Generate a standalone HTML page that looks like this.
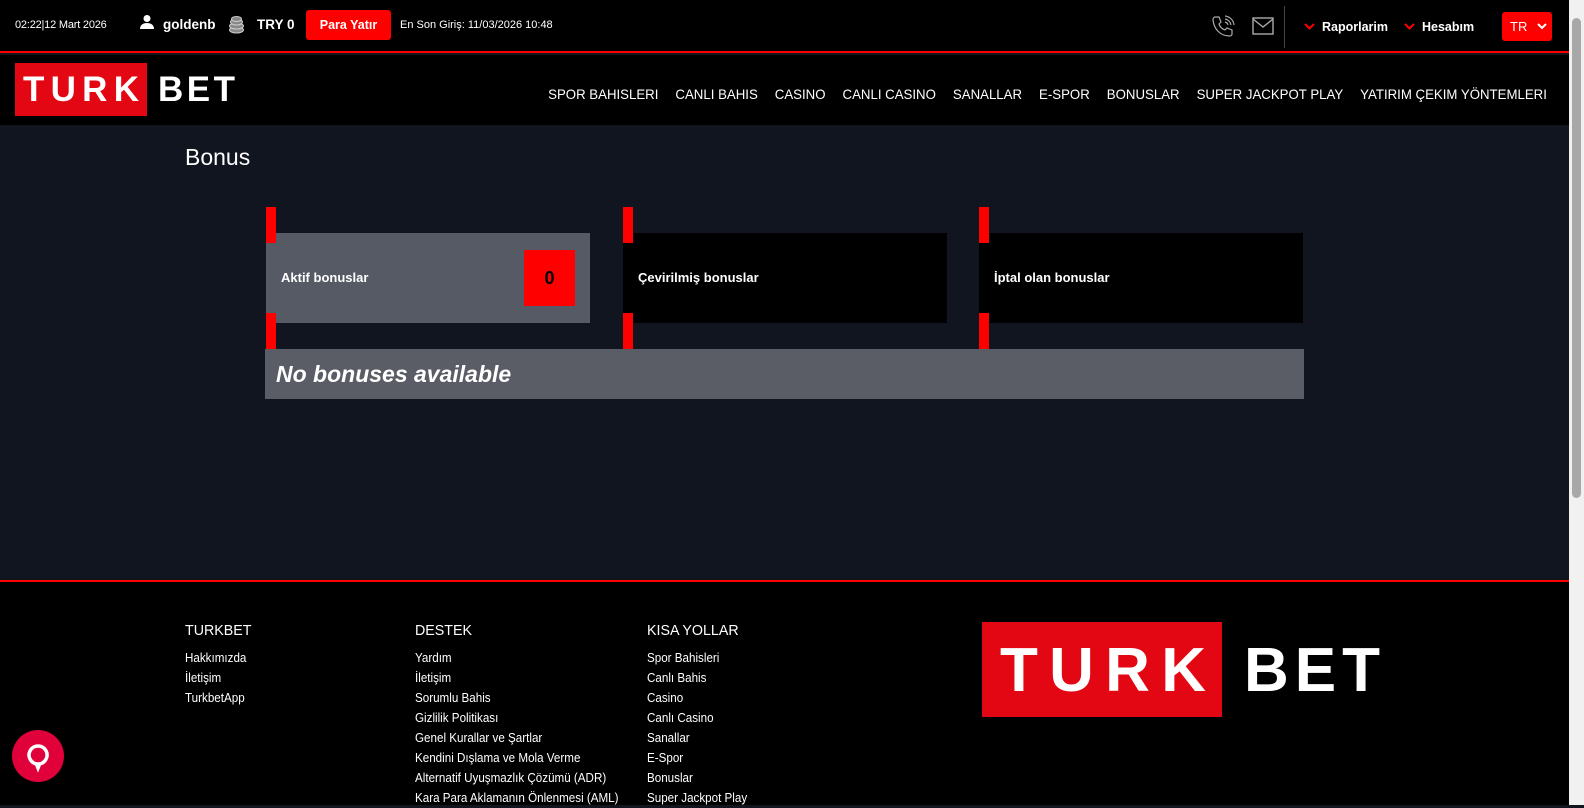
<!DOCTYPE html>
<html><head><meta charset="utf-8">
<style>
*{margin:0;padding:0;box-sizing:border-box}
html,body{width:1584px;height:805px;overflow:hidden;background:#111520;font-family:"Liberation Sans",Arial,sans-serif;color:#fff}
.abs{position:absolute}
#top{position:absolute;left:0;top:0;width:1569px;height:53px;background:#000;border-bottom:2px solid #f00}
#hdr{position:absolute;left:0;top:55px;width:1569px;height:70px;background:#000}
.nav{position:absolute;right:37px;top:86px;display:flex;gap:18px;font-size:14px;transform:scaleX(.945);transform-origin:right center;white-space:nowrap}
#scroll{position:absolute;left:1569px;top:0;width:15px;height:805px;background:#f1f1f1}
#thumb{position:absolute;left:1572px;top:18px;width:9px;height:480px;background:#a8a8a8;border-radius:5px}
.bar{position:absolute;width:10px;background:#f00}
.card{position:absolute;top:233px;height:90px;width:324px;background:#000;font-size:13px;font-weight:bold;padding-left:15px;line-height:90px}
#foot{position:absolute;left:0;top:580px;width:1569px;height:225px;background:#000;border-top:2px solid #f00}
.fc{position:absolute;top:622px}
.fc h4{font-weight:normal;font-size:15px;margin-bottom:9px;transform:scaleX(.95);transform-origin:left}
.fc div{font-size:12.5px;line-height:20px;transform:scaleX(.93);transform-origin:left;white-space:nowrap}
</style></head><body>
<div id="top"></div>
<div class="abs" style="left:15px;top:19px;font-size:11px;letter-spacing:-.2px">02:22|12 Mart 2026</div>
<svg class="abs" style="left:139px;top:14px" width="16" height="16" viewBox="0 0 16 16"><circle cx="8" cy="4.5" r="3.5" fill="#fff"/><path d="M1 15c0-4 3-6 7-6s7 2 7 6z" fill="#fff"/></svg>
<div class="abs" style="left:163px;top:17px;font-size:13.5px;font-weight:bold">goldenb</div>
<svg class="abs" style="left:228px;top:15px" width="17" height="19" viewBox="0 0 17 19"><g fill="#888" stroke="#ccc" stroke-width="1"><ellipse cx="8.5" cy="15" rx="7" ry="3"/><ellipse cx="8.5" cy="11" rx="7" ry="3"/><ellipse cx="8.5" cy="7" rx="6" ry="3"/><ellipse cx="8.5" cy="4" rx="5" ry="2.5"/></g></svg>
<div class="abs" style="left:257px;top:17px;font-size:13.5px;font-weight:bold">TRY 0</div>
<div class="abs" style="left:306px;top:10px;width:85px;height:30px;background:#f00;border-radius:3px;font-size:12.5px;font-weight:bold;text-align:center;line-height:30px">Para Yatır</div>
<div class="abs" style="left:400px;top:19px;font-size:11px">En Son Giriş: 11/03/2026 10:48</div>
<svg class="abs" style="left:1210px;top:14px" width="26" height="26" viewBox="0 0 26 26" fill="none" stroke="#aaa" stroke-width="1.2"><path d="M5 3l4 0 2 5-2 2c1 3 3 5 6 6l2-2 5 2v4c0 1-1 2-2 2C10 22 4 15 3 6c0-2 1-3 2-3z"/><path d="M15 8a4 4 0 0 1 3 3M15 5a7 7 0 0 1 6 6M15 2a10 10 0 0 1 9 9"/></svg>
<svg class="abs" style="left:1252px;top:17px" width="22" height="18" viewBox="0 0 22 18" fill="none" stroke="#aaa" stroke-width="1.4"><rect x="1" y="1" width="20" height="16"/><path d="M1 2l10 8 10-8"/></svg>
<div class="abs" style="left:1284px;top:6px;width:1px;height:42px;background:#444"></div>
<svg class="abs" style="left:1304px;top:23px" width="11" height="7" viewBox="0 0 11 7"><path d="M1 1l4.5 4.5L10 1" stroke="#f00" stroke-width="2" fill="none"/></svg>
<div class="abs" style="left:1322px;top:20px;font-size:12.5px;font-weight:bold">Raporlarim</div>
<svg class="abs" style="left:1404px;top:23px" width="11" height="7" viewBox="0 0 11 7"><path d="M1 1l4.5 4.5L10 1" stroke="#f00" stroke-width="2" fill="none"/></svg>
<div class="abs" style="left:1422px;top:20px;font-size:12.5px;font-weight:bold">Hesabım</div>
<div class="abs" style="left:1502px;top:12px;width:50px;height:29px;background:#f00;border-radius:3px"></div>
<div class="abs" style="left:1510px;top:19px;font-size:13px">TR</div>
<svg class="abs" style="left:1537px;top:23px" width="10" height="7" viewBox="0 0 10 7"><path d="M1 1l4 4 4-4" stroke="#fff" stroke-width="2" fill="none"/></svg>

<div id="hdr"></div>
<svg class="abs" style="left:15px;top:63px" width="222" height="53" viewBox="0 0 222 53">
<rect x="0" y="0" width="132" height="53" fill="#e30613"/>
<text x="8" y="38" font-family="Liberation Sans" font-weight="bold" font-size="35" fill="#fff" textLength="116" lengthAdjust="spacing">TURK</text>
<text x="143" y="38" font-family="Liberation Sans" font-weight="bold" font-size="35" fill="#fff" textLength="77" lengthAdjust="spacing">BET</text>
</svg>
<div class="nav"><span>SPOR BAHISLERI</span><span>CANLI BAHIS</span><span>CASINO</span><span>CANLI CASINO</span><span>SANALLAR</span><span>E-SPOR</span><span>BONUSLAR</span><span>SUPER JACKPOT PLAY</span><span>YATIRIM ÇEKIM YÖNTEMLERI</span></div>

<div class="abs" style="left:185px;top:144px;font-size:23px">Bonus</div>

<div class="card" style="left:266px;background:#555a64">Aktif bonuslar</div>
<div class="abs" style="left:524px;top:250px;width:51px;height:56px;background:#f00;color:#000;font-size:18px;font-weight:bold;text-align:center;line-height:56px">0</div>
<div class="card" style="left:623px">Çevirilmiş bonuslar</div>
<div class="card" style="left:979px">İptal olan bonuslar</div>
<div class="bar" style="left:266px;top:207px;height:36px"></div>
<div class="bar" style="left:266px;top:313px;height:36px"></div>
<div class="bar" style="left:623px;top:207px;height:36px"></div>
<div class="bar" style="left:623px;top:313px;height:36px"></div>
<div class="bar" style="left:979px;top:207px;height:36px"></div>
<div class="bar" style="left:979px;top:313px;height:36px"></div>
<div class="abs" style="left:265px;top:349px;width:1039px;height:50px;background:#5a5d66;font-size:23px;font-weight:bold;font-style:italic;padding-left:11px;line-height:50px">No bonuses available</div>

<div id="foot"></div>
<div class="fc" style="left:185px"><h4>TURKBET</h4><div>Hakkımızda</div><div>İletişim</div><div>TurkbetApp</div></div>
<div class="fc" style="left:415px"><h4>DESTEK</h4><div>Yardım</div><div>İletişim</div><div>Sorumlu Bahis</div><div>Gizlilik Politikası</div><div>Genel Kurallar ve Şartlar</div><div>Kendini Dışlama ve Mola Verme</div><div>Alternatif Uyuşmazlık Çözümü (ADR)</div><div>Kara Para Aklamanın Önlenmesi (AML)</div></div>
<div class="fc" style="left:647px"><h4>KISA YOLLAR</h4><div>Spor Bahisleri</div><div>Canlı Bahis</div><div>Casino</div><div>Canlı Casino</div><div>Sanallar</div><div>E-Spor</div><div>Bonuslar</div><div>Super Jackpot Play</div></div>
<svg class="abs" style="left:982px;top:622px" width="402" height="95" viewBox="0 0 402 95">
<rect x="0" y="0" width="240" height="95" fill="#e30613"/>
<text x="18" y="69" font-family="Liberation Sans" font-weight="bold" font-size="62" fill="#fff" textLength="206" lengthAdjust="spacing">TURK</text>
<text x="262" y="69" font-family="Liberation Sans" font-weight="bold" font-size="62" fill="#fff" textLength="136" lengthAdjust="spacing">BET</text>
</svg>
<svg class="abs" style="left:12px;top:730px" width="52" height="52" viewBox="0 0 52 52"><circle cx="26" cy="26" r="26" fill="#e0003a"/><path d="M26 16a9 9 0 1 0 0.1 0z M24 33l2 5 2-5" fill="none" stroke="#fff" stroke-width="3.5"/></svg>
<div id="scroll"></div><div id="thumb"></div>
</body></html>
